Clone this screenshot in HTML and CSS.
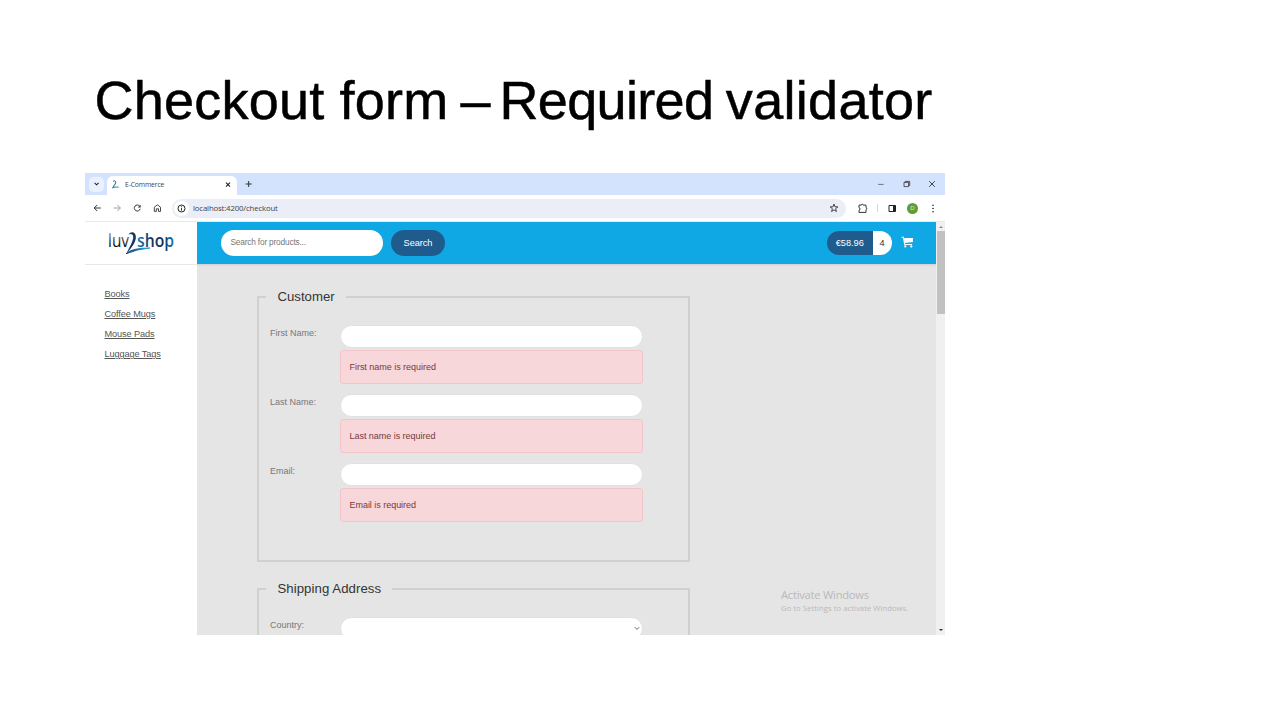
FILE: index.html
```html
<!DOCTYPE html>
<html lang="en">
<head>
<meta charset="utf-8">
<title>Checkout form – Required validator</title>
<link rel="stylesheet" href="styles.css">
</head>
<body>
<main class="slide">
  <h1 class="title"><span class="title-a">Checkout form</span><span class="title-dash"> –</span><span class="title-b"> Required</span><span class="title-c"> validator</span></h1>
  <section class="browser">
    <div class="tabstrip">
      <div class="tab-menu"><svg width="6" height="4" viewBox="0 0 6 4"><path d="M.6 .8 2.600 2.800 4.600 .8" fill="none" stroke="#222" stroke-width="1.1"/></svg></div>
      <div class="tab">
        <svg class="favicon" width="9" height="9" viewBox="0 0 9 9"><path d="M2 1.5C4-.2 5.500 1.500 4.200 4L1.900 7.200" fill="none" stroke="#16597f" stroke-width="1"/><path d="M1.200 8Q4 6.500 7.600 7.200" fill="none" stroke="#1788c3" stroke-width="1.1"/></svg>
        <span class="tab-name">E-Commerce</span>
        <svg class="tab-close" width="6" height="6" viewBox="0 0 6 6"><path d="M1 .7 5 4.700M5 .7 1 4.700" stroke="#222" stroke-width="1.1"/></svg>
      </div>
      <svg class="plus" width="8" height="8" viewBox="0 0 8 8"><path d="M3.700 1v6M.7 4h6" stroke="#333" stroke-width="1"/></svg>
      <div class="window-buttons">
        <svg width="8" height="8" viewBox="0 0 8 8"><path d="M1.2 4.4h5.4" stroke="#666" stroke-width=".9"/></svg>
        <svg width="8" height="8" viewBox="0 0 8 8"><path d="M1 2.400h4.500v4.200H1zM2.200 2.400V1.400h4.500v4.200h-1" fill="none" stroke="#333" stroke-width=".8"/></svg>
        <svg width="8" height="8" viewBox="0 0 8 8"><path d="M1.2 1.2 6.8 6.8M6.8 1.2 1.2 6.8" stroke="#333" stroke-width=".9"/></svg>
      </div>
    </div>
    <div class="toolbar">
      <div class="nav">
        <svg width="8" height="8" viewBox="0 0 8 8"><path d="M7.800 4H1.200M4.200 1 1.200 4l3 3" fill="none" stroke="#333" stroke-width="1"/></svg>
        <svg width="8" height="8" viewBox="0 0 8 8"><path d="M.8 4H7.400M4.400 1 7.400 4 4.400 7" fill="none" stroke="#999" stroke-width=".9"/></svg>
        <svg width="8" height="8" viewBox="0 0 8 8"><path d="M7.200 4.800A3 3 0 1 1 6.700 2.200" fill="none" stroke="#333" stroke-width="1"/><path d="M7.600.7v2.900H4.700z" fill="#333"/></svg>
        <svg width="8" height="8" viewBox="0 0 8 8"><path d="M1.300 7.400V3.200L4.400.8l3.100 2.400v4.200H5.500V4.800H3.300v2.600z" fill="none" stroke="#333" stroke-width=".9"/></svg>
      </div>
      <div class="address">
        <span class="info"><svg width="9" height="9" viewBox="0 0 9 9"><circle cx="4.5" cy="4.5" r="3.5" fill="none" stroke="#222"/><path d="M4.5 4v2.7M4.5 2.3v1" stroke="#222" stroke-width=".9"/></svg></span>
        <span class="url">localhost:4200/checkout</span>
        <svg class="star" width="10" height="10" viewBox="0 0 10 10"><path d="M5 1.1 6 3.8l2.9.1L6.6 5.7l.8 2.8L5 6.9 2.6 8.5l.8-2.8L1.1 3.9 4 3.8z" fill="none" stroke="#333" stroke-width=".9"/></svg>
      </div>
      <div class="tools">
        <svg width="11" height="11" viewBox="0 0 11 11"><path d="M2 2.100h2.400C4.400.9 6.200.9 6.200 2.100H9v2.500c1 0 1 1.800 0 1.800v3H2V7.300c1.400 0 1.400-2.600 0-2.600z" fill="none" stroke="#333" stroke-width="1"/></svg>
        <i class="divider"></i>
        <svg width="9" height="9" viewBox="0 0 9 9"><path d="M1 1.500h6.500v6H1z" fill="none" stroke="#222"/><path d="M5 1.500H7.500v6H5z" fill="#222"/></svg>
        <span class="avatar">D</span>
        <svg width="4" height="9" viewBox="0 0 4 9"><g fill="#222"><circle cx="2" cy="1.3" r=".8"/><circle cx="2" cy="4.5" r=".8"/><circle cx="2" cy="7.7" r=".8"/></g></svg>
      </div>
    </div>
    <div class="viewport">
      <aside class="sidebar">
        <div class="logo">
          <svg width="78" height="34" viewBox="0 0 78 34">
            <defs>
              <linearGradient id="luv" x1="0" y1="0" x2="0" y2="1"><stop offset="0.2" stop-color="#888"/><stop offset=".7" stop-color="#111"/></linearGradient>
              <linearGradient id="shop"><stop offset="0" stop-color="#1683c2"/><stop offset=".35" stop-color="#123760"/><stop offset=".7" stop-color="#10325c"/><stop offset="1" stop-color="#167bbb"/></linearGradient>
              <linearGradient id="two"><stop offset="0" stop-color="#0d3a67"/><stop offset="1" stop-color="#22a4dd"/></linearGradient>
            </defs>
            <text class="logo-luv" x="1" y="19.200" textLength="21" lengthAdjust="spacingAndGlyphs" fill="url(#luv)">luv</text>
            <text class="logo-shop" x="30" y="19.200" textLength="37" lengthAdjust="spacingAndGlyphs" fill="url(#shop)">shop</text>
            <path d="M21.500 6.500C24 2.800 29.200 4 28.900 9.500C28.600 14.500 24.200 20.500 19.600 25.200C22.600 18.500 26.300 13.500 26.200 8.800C26.100 6 23.800 5.300 21.500 6.500Z" fill="#113b61"/>
            <path d="M19 25.700Q25 19.800 43 20Q30 21.200 19 25.700Z" fill="url(#two)" stroke="url(#two)" stroke-width=".9"/>
          </svg>
        </div>
        <nav class="menu"><a>Books</a><a>Coffee Mugs</a><a>Mouse Pads</a><a>Luggage Tags</a></nav>
      </aside>
      <div class="page">
        <header class="header">
          <div class="search">Search for products...</div>
          <div class="search-button">Search</div>
          <div class="cart"><span class="total">€58.96</span><span class="count">4</span></div>
          <svg class="cart-icon" width="13" height="12" viewBox="0 0 13 12"><path d="M.5 1.300h2l1.200 7.200h7.400" fill="none" stroke="#fff" stroke-width="1.100"/><path d="M2.700 1.900H12v4.100L3.600 7z" fill="#fff"/><circle cx="4.300" cy="10.400" r="1.100" fill="#fff"/><circle cx="10.300" cy="10.400" r="1.100" fill="#fff"/></svg>
        </header>
        <form class="form">
          <fieldset class="group customer">
            <legend>Customer</legend>
            <div class="row"><label>First Name:</label><div class="field"><div class="input"></div><div class="alert">First name is required</div></div></div>
            <div class="row"><label>Last Name:</label><div class="field"><div class="input"></div><div class="alert">Last name is required</div></div></div>
            <div class="row"><label>Email:</label><div class="field"><div class="input"></div><div class="alert">Email is required</div></div></div>
          </fieldset>
          <fieldset class="group">
            <legend class="ship">Shipping Address</legend>
            <div class="row"><label>Country:</label><div class="field"><div class="input select"><svg width="6" height="5" viewBox="0 0 6 5"><path d="M.8 1.200 3 3.400 5.200 1.200" fill="none" stroke="#666" stroke-width="1"/></svg></div></div></div>
          </fieldset>
        </form>
        <div class="watermark"><p class="wm-title">Activate Windows</p><p class="wm-text">Go to Settings to activate Windows.</p></div>
      </div>
      <div class="scrollbar"><i class="up"></i><i class="thumb"></i><i class="down"></i></div>
    </div>
  </section>
</main>
</body>
</html>
```
FILE: styles.css
```css
* { box-sizing: border-box; }
body { margin: 0; background: #fff; font-family: "Liberation Sans", Arial, sans-serif; overflow: hidden; }
svg { display: block; flex: none; }
.slide { width: 1286px; height: 706px; padding: 70px 0 0 85px; }
.title { margin: 0; height: 103px; padding-left: 9.500px; font-size: 54px; font-weight: 400; line-height: 60px; color: #000; white-space: pre; -webkit-text-stroke: .5px #000; }
.title-a { letter-spacing: .22px; }
.title-dash { word-spacing: -3px; }
.title-b { letter-spacing: -.65px; word-spacing: -5.500px; }
.title-c { letter-spacing: .3px; word-spacing: -2.800px; }
.browser { width: 860px; height: 462px; display: flex; flex-direction: column; overflow: hidden; }

.tabstrip { height: 22px; background: #d3e3fd; display: flex; align-items: center; }
.tab-menu { width: 15px; height: 15px; margin-left: 4px; border-radius: 5px; background: #e9f1fe; display: grid; place-items: center; }
.tab { width: 130px; height: 19px; margin: 3px 0 0 3px; padding: 0 6px 2px 4px; border-radius: 6px 6px 0 0; background: #fff; display: flex; align-items: center; }
.tab-name { flex: 1; margin-left: 5px; font: 6.8px "Open Sans", sans-serif; color: #444; letter-spacing: -.14px; }
.plus { margin-left: 8px; }
.window-buttons { margin-left: auto; padding-right: 9px; display: flex; gap: 17.500px; }

.toolbar { height: 27px; border-bottom: 1px solid #e6e9ee; display: flex; align-items: center; }
.nav { display: flex; gap: 12px; padding-left: 8px; }
.address { width: 674px; height: 19px; margin-left: 11px; padding: 0 7px 0 2px; border-radius: 10px; background: #ebeef7; display: flex; align-items: center; }
.info { width: 15px; height: 15px; border-radius: 50%; background: #fff; display: grid; place-items: center; }
.url { flex: 1; margin-left: 4px; font: 7.800px "Open Sans", sans-serif; color: #444; letter-spacing: -.16px; }
.tools { display: flex; align-items: center; padding-left: 11px; }
.divider { width: 1px; height: 8px; margin: 0 10px 0 9px; background: #c9dcfa; }
.avatar { width: 11px; height: 11px; margin: 0 13px 0 10px; border-radius: 50%; background: #5f9d33; color: #dcebd0; font-size: 6px; line-height: 11px; text-align: center; }

.viewport { flex: 1; min-height: 0; display: flex; }
.sidebar { width: 112px; background: #fff; }
.logo { height: 43px; padding: 6px 0 0 22px; border-bottom: 1px solid #e8e8e8; }
.logo-luv { font: 400 18px "Open Sans", sans-serif; }
.logo-shop { font: 600 18px "Open Sans", sans-serif; }
.menu { padding: 19px 0 0 19.500px; display: flex; flex-direction: column; }
.menu a { height: 20.100px; line-height: 20.100px; font-size: 9.200px; letter-spacing: -.1px; color: #555; text-decoration: underline; }

.page { position: relative; width: 739px; background: #e5e5e5; overflow: hidden; }
.header { height: 42px; padding: 0 22px 0 24px; background: #10a7e5; box-shadow: 0 1px 2px #ccc; display: flex; align-items: center; }
.search { width: 162px; height: 26px; padding-left: 9.500px; border-radius: 13px; background: #fff; color: #777; font-size: 8.300px; letter-spacing: -.18px; line-height: 25px; }
.search-button { width: 54px; height: 26px; margin-left: 8px; border-radius: 13px; background: #205b8e; color: #fff; font-size: 9.200px; letter-spacing: -.05px; line-height: 26px; text-align: center; }
.cart { height: 24px; margin-left: auto; border-radius: 12px; overflow: hidden; display: flex; font-size: 9.200px; line-height: 24px; text-align: center; }
.total { width: 45.500px; background: #205b8e; color: #fff; }
.count { width: 19px; background: #fff; color: #333; }
.cart-icon { margin: 0 .5px 2px 9px; }

.form { width: 433px; margin: 23px 0 0 60.200px; }
.group { margin: 0 0 17px; padding: 0 0 0 10.800px; border: 2px solid #d0d0d0; min-width: 0; }
.customer { height: 275px; }
.group legend { margin-left: -3.500px; padding: 0 11px; font-size: 13.200px; line-height: 19px; color: #333; }
.group legend.ship { letter-spacing: .06px; }
.row { height: 69.100px; display: flex; }
.row:first-of-type { margin-top: 19px; }
.row label { width: 70px; padding-top: 1.500px; font-size: 9px; line-height: 12px; color: #777; }
.field { width: 303px; }
.input { height: 23px; border: 1px solid #e0e0e0; border-radius: 12px; background: #fff; }
.alert { height: 34px; margin-top: 2px; padding-left: 8.500px; border: 1px solid #f2c5ca; border-radius: 3px; background: #f7d7da; font-size: 9px; letter-spacing: -.03px; line-height: 32.500px; color: #763942; }
.select { display: flex; justify-content: flex-end; align-items: center; padding-right: 2px; }
.watermark { position: absolute; left: 584px; top: 364px; color: #b9b9b9; font-family: "Open Sans", sans-serif; white-space: nowrap; }
.watermark p { margin: 0; }
.wm-title { font-size: 11.200px; line-height: 17px; letter-spacing: -.25px; }
.wm-text { font-size: 7.700px; line-height: 11px; letter-spacing: .04px; }

.scrollbar { width: 9px; background: #f0f0f0; display: flex; flex-direction: column; align-items: center; }
.up { margin-top: 4px; border: 2px solid transparent; border-top: 0; border-bottom: 2px solid #888; }
.thumb { width: 8px; height: 83px; margin-top: 3px; background: #c1c1c1; }
.down { margin-top: auto; margin-bottom: 4px; border: 2px solid transparent; border-bottom: 0; border-top: 2px solid #333; }
```
